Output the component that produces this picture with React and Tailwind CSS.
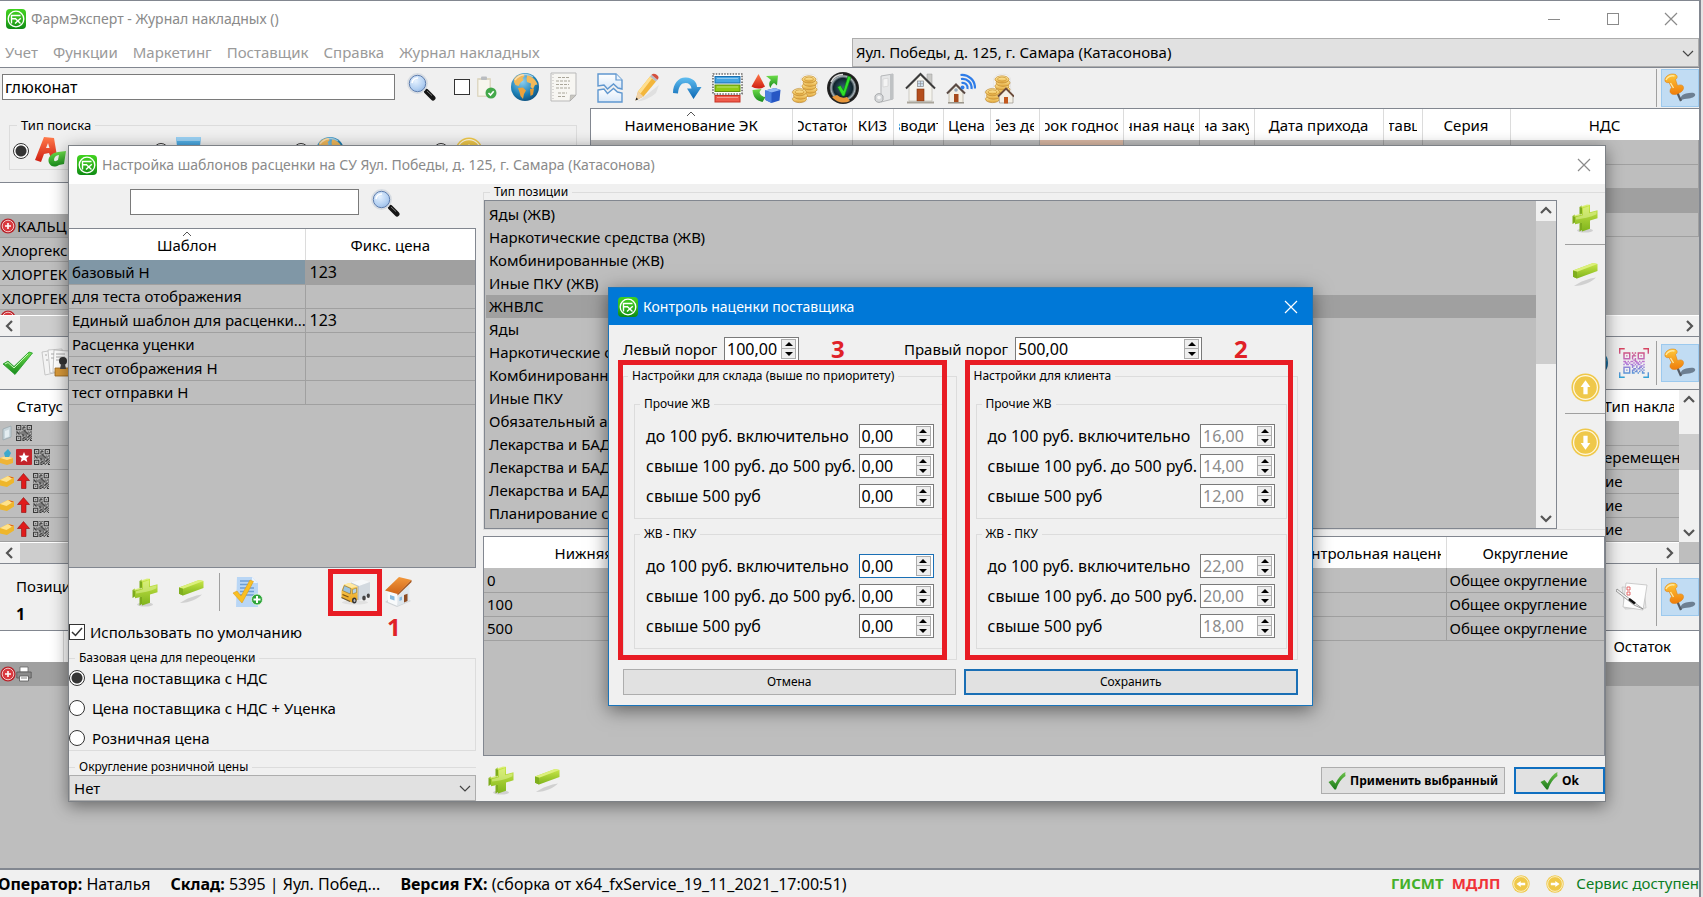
import React from 'react';

/* ---------- icons ---------- */

function Defs() {
  const lin = (id, a, b, c) => (
    <linearGradient id={id} x1="0" y1="0" x2="0" y2="1">
      <stop offset="0" stopColor={a} />
      {c && <stop offset=".5" stopColor={c} />}
      <stop offset="1" stopColor={b} />
    </linearGradient>
  );
  return (
    <svg width="0" height="0" className="absolute" aria-hidden="true">
      <defs>
        {lin('gLogo', '#3fd21e', '#0c8a12', '#35b81f')}
        {lin('gLime', '#cbe84a', '#7fb41c')}
        {lin('gLimeD', '#a5cf33', '#6c9f14')}
        {lin('gGold', '#fff0b0', '#e0a437', '#f5d076')}
        {lin('gBlue', '#5fbdf0', '#0d68b4')}
        {lin('gGreen', '#6ddd4a', '#188a1c')}
        {lin('gRed', '#ff7a4a', '#cf1d12')}
        {lin('gPin', '#ffc93a', '#ef7c0a')}
        {lin('gCab', '#ffd768', '#e9a21b')}
        {lin('gRoof', '#f2983c', '#cf6418')}
        {lin('gPage', '#ffffff', '#d9e8f8')}
        {lin('gTick', '#6cc24a', '#1b7a1b')}
        <radialGradient id="gLens" cx=".4" cy=".35" r=".75">
          <stop offset="0" stopColor="#e6f2ff" />
          <stop offset=".6" stopColor="#b3d0f2" />
          <stop offset="1" stopColor="#8aaede" />
        </radialGradient>
        <radialGradient id="gSea" cx=".4" cy=".3" r=".8">
          <stop offset="0" stopColor="#8fd0f2" />
          <stop offset=".6" stopColor="#1c7fb4" />
          <stop offset="1" stopColor="#0a4470" />
        </radialGradient>
        <radialGradient id="gOrb" cx=".5" cy=".5" r=".5">
          <stop offset="0" stopColor="#37637a" />
          <stop offset=".6" stopColor="#10232c" />
          <stop offset=".75" stopColor="#a9b4ba" />
          <stop offset=".86" stopColor="#161616" />
          <stop offset="1" stopColor="#2c2c2c" />
        </radialGradient>
        <linearGradient id="gQr" gradientUnits="userSpaceOnUse" x1="0" y1="-2" x2="0" y2="19">
          <stop offset="0" stopColor="#d8435c" />
          <stop offset=".5" stopColor="#b878d8" />
          <stop offset="1" stopColor="#2fa3d6" />
        </linearGradient>
      </defs>
    </svg>
  );
}

const Logo = () => (
  <svg width="20" height="20" viewBox="0 0 20 20" className="shrink-0" aria-hidden="true">
    <rect width="20" height="20" rx="4" fill="url(#gLogo)" />
    <circle cx="10" cy="10" r="7.800" fill="none" stroke="#fff" strokeWidth="1.300" />
    <path d="M5.500 14.500V6.500h9M5.500 9.800h4.500M9 9.200l5.500 5.400M14.800 9.200L9 14.600" fill="none" stroke="#fff" strokeWidth="1.400" />
  </svg>
);

const Magnifier = () => (
  <svg width="29" height="28" viewBox="0 0 29 28" aria-hidden="true">
    <path d="M17 16l3 3" stroke="#8c8c8c" strokeWidth="3" />
    <path d="M19.500 18.500l6.500 6.500" stroke="#161616" strokeWidth="5" strokeLinecap="round" />
    <path d="M20 18l5 4.600" stroke="#777" strokeWidth="1" />
    <circle cx="10.500" cy="10.500" r="9.200" fill="url(#gLens)" stroke="#d7dce2" strokeWidth="2.400" />
    <circle cx="10.500" cy="10.500" r="8.200" fill="none" stroke="#5f7fb0" strokeWidth="1" />
    <path d="M5 10a6 6 0 0 1 6-5" fill="none" stroke="#fff" strokeWidth="1.600" />
  </svg>
);

const Plus3D = () => (
  <svg width="26" height="29" viewBox="0 0 26 29" aria-hidden="true">
    <ellipse cx="13" cy="26.500" rx="8" ry="2" fill="#0002" />
    <path d="M7.500 3L10 1.500V10l-2.500 1zM.5 12L3 10.500v8L.5 20zM7.500 19.500L10 18v8l-2.500 1.500z" fill="#7dab1d" />
    <path d="M7.500 3L15 .5l3 .3L10.500 3.500zM.5 12l7-2 3-.3L3 12.500z" fill="#dcf07c" />
    <path d="M10 3.300l8-2.500v7.500l7.500-2v8L18 16.500v8.300L10 27.500v-8.800L3 20.300v-8l7-1.800z" fill="url(#gLime)" />
    <path d="M11 4.200l6-1.900v7l7.500-2v3C19 13 10 15 4 15.500v-2.300l7-1.900z" fill="#eefab0" opacity=".45" />
  </svg>
);

const Minus3D = () => (
  <svg width="26" height="26" viewBox="0 0 26 26" aria-hidden="true">
    <path d="M2 24C8 19.500 17 16.500 24 15.500c-4 4-12 8.500-22 8.500z" fill="#0002" />
    <path d="M1 8.500L21 1l4.500 1v7L5 16.500l-4-1.700z" fill="url(#gLime)" />
    <path d="M1 8.500L21 1l4.500 1L5 9.700z" fill="#dcf07c" />
    <path d="M1 8.500l4 1.200v6.800L1 14.800z" fill="#7fae1e" />
  </svg>
);

const Coin = ({ dir, size = 29 }) => {
  const turn = { up: 0, right: 90, down: 180, left: 270 }[dir];
  return (
    <svg width={size} height={size} viewBox="0 0 30 30" aria-hidden="true">
      <circle cx="15" cy="15" r="14.500" fill="#efc84a" />
      <circle cx="15" cy="15" r="12.300" fill="none" stroke="#fff8e0" strokeWidth="1.300" />
      <path d="M15 7.500l5 7h-2.800v7.500h-4.400v-7.500H10z" fill="#fff" transform={`rotate(${turn} 15 15)`} />
    </svg>
  );
};

const Globe = ({ size = 30 }) => (
  <svg width={size} height={size} viewBox="0 0 30 30" aria-hidden="true">
    <circle cx="15" cy="15" r="14" fill="url(#gSea)" />
    <path d="M4 7c3-4 7-5 9.500-5l1 2.500-2 1.500 1 2-3 2.500-2 3.500-3-1-1.500-3z" fill="#f2b95a" />
    <path d="M8 16l5-.5 3 3-2 3.500-1 5-2.500-3-1-4z" fill="#eaa23c" />
    <path d="M17 3.500c5 .5 9 4.500 10.500 9l-2.500.5-2 4-2.500-2 .5-3.500-4-1.500-.5-3z" fill="#f2b95a" />
    <path d="M20 17l4-.5-1 6-2.500 1.500z" fill="#e59a33" />
    <path d="M5 8a13 13 0 0 1 18-3" stroke="#fff8" strokeWidth="1.500" fill="none" />
  </svg>
);

const Clipboard = () => (
  <svg width="21" height="23" viewBox="0 0 21 23" aria-hidden="true">
    <rect x="1" y="2" width="14" height="19" rx="1" fill="#ded8c4" />
    <rect x="2.500" y="4" width="11" height="15.500" fill="#f8f6ee" />
    <rect x="5" y=".5" width="6" height="3.500" rx="1" fill="#b9bcc0" />
    <circle cx="15" cy="17" r="5.500" fill="#43a84a" />
    <path d="M12.500 17l2 2 3.200-3.800" stroke="#fff" strokeWidth="1.600" fill="none" />
  </svg>
);

const Paper = () => (
  <svg width="27" height="30" viewBox="0 0 27 30" aria-hidden="true">
    <path d="M1 1h25v22l-6 6H1z" fill="#f7f6f2" stroke="#b9b9b9" />
    <path d="M20 29l.5-6 5.500.2z" fill="#c9c7c0" stroke="#a8a8a8" strokeWidth=".6" />
    <path d="M8 5.500h12M6 9h14M6 12.500h13M6 16h14M8 21h9M8 24.500h8" stroke="#aaa69a" strokeWidth="1.100" strokeDasharray="3 1" />
    <path d="M3 2v26" stroke="#bdb9b9" strokeWidth="1" strokeDasharray="1 2" />
  </svg>
);

const TornDoc = () => (
  <svg width="28" height="30" viewBox="0 0 28 30" aria-hidden="true">
    <path d="M2 13V1h18l6 6v9l-4-1-4.500-4-6 5-3.500-4z" fill="url(#gPage)" stroke="#5f97cf" strokeWidth="1.400" />
    <path d="M20 1v6h6" fill="#eaf3fc" stroke="#5f97cf" strokeWidth="1.200" />
    <path d="M2 17l6-1 3.500 4.500 6-5 4 3.500 4.500 1v9H2z" fill="url(#gPage)" stroke="#5f97cf" strokeWidth="1.400" />
  </svg>
);

const Pencil = () => (
  <svg width="26" height="30" viewBox="0 0 26 30" aria-hidden="true">
    <path d="M3 28c6-2 16-12 22-16l-3 8c-6 5-14 9-19 8z" fill="#0001" />
    <path d="M1.500 27.500l2.500-9L16 3.500l6 5L9.500 23.500z" fill="#f3b63c" />
    <path d="M4 18.500L16 3.500l2.200 1.800L6.500 20.500z" fill="#ffdf8e" />
    <path d="M1.500 27.500l2.500-9 5.500 5z" fill="#f0d2a8" />
    <path d="M1.500 27.500l.8-3 2 1.800z" fill="#222" />
    <path d="M16 3.500l1.500-1.800 6 5L22 8.500z" fill="#b9bdc4" />
    <path d="M17.500 1.700C19 0 21 .5 23 2s2 3.200.5 4.700z" fill="#d4503e" />
  </svg>
);

const CurveArrow = () => (
  <svg width="30" height="24" viewBox="0 0 30 24" aria-hidden="true">
    <path d="M1 17C1 7 7 1 14 1.500S25 6 25 11h4.500L21.500 23 15 12.500h4.500C19 9 17 7 13.500 7 9.500 7 6.500 10 6 17.500z" fill="url(#gBlue)" />
  </svg>
);

const RowsIcon = () => (
  <svg width="31" height="30" viewBox="0 0 31 30" aria-hidden="true">
    <rect x="1" y="1" width="29" height="20" fill="#fff" stroke="#222" strokeWidth="1.100" strokeDasharray="1.500 1.300" />
    <rect x="3" y="3.500" width="25" height="6.500" fill="#45a5e4" stroke="#1b6fae" />
    <rect x="3" y="12" width="25" height="6.500" fill="#8ecb15" stroke="#5b8d0c" />
    <rect x="3" y="22.500" width="25" height="6.500" fill="#ef5b4c" stroke="#c53225" />
    <path d="M5 5.500h21M5 14h21M5 24.500h21" stroke="#fff6" strokeWidth="1.200" />
  </svg>
);

const Shapes = () => (
  <svg width="30" height="30" viewBox="0 0 30 30" aria-hidden="true">
    <path d="M7.500 1L14 13.500c-3 2.500-10 2.500-13.500 0z" fill="url(#gRed)" />
    <path d="M15 3l12-.5-1 10-3-2.500c-2 1-3 3-3.500 5-2-3-1.500-6.500.5-8z" fill="url(#gGreen)" />
    <path d="M1.500 17l9-1-2 3c.5 3 2.500 4.500 6 5l-3 5C5 27.500 2 24 1.500 17z" fill="url(#gGreen)" />
    <path d="M14 17.500l10-2.500 5.500 2-1 10.500-8 2.500-6-3z" fill="#2757c4" />
    <path d="M14 17.500l10-2.500 5.500 2-9 2.500z" fill="#8bb3f5" />
    <path d="M14 17.500l6.500 2V30l-6-3z" fill="#4c80e0" />
  </svg>
);

const CoinStack = ({ x, y, n }) => (
  <g>
    {Array.from({ length: n }, (_, i) => (
      <ellipse key={i} cx={x + (i % 2)} cy={y - i * 3.4} rx="7" ry="3.6" fill="url(#gGold)" stroke="#c08a30" strokeWidth=".7" />
    ))}
    <ellipse cx={x + ((n - 1) % 2)} cy={y - (n - 1) * 3.4 - 0.3} rx="4.500" ry="2" fill="none" stroke="#c98f2c" strokeWidth=".7" />
  </g>
);

const Coins = ({ house }) => (
  <svg width="30" height="31" viewBox="0 0 30 31" aria-hidden="true">
    <path d="M10 5c2-5 15-5 16 0l1 15-9 4-2 4c-5 3-14 2-15-2V18l9-4z" fill="#fff" stroke="#dedede" strokeWidth=".8" />
    <CoinStack x={18} y={20} n={5} />
    <CoinStack x={8.5} y={26} n={3} />
    {house && (
      <g>
        <path d="M15 23l7-7 7 7v7H15.500z" fill="#f3efe6" stroke="#8b8378" strokeWidth=".6" />
        <path d="M14 23.500l8-8 8 8" stroke="#6a4a3a" strokeWidth="1.800" fill="none" />
        <rect x="20" y="24" width="4" height="6.500" fill="#c2571d" />
      </g>
    )}
  </svg>
);

const Orb = () => (
  <svg width="32" height="32" viewBox="0 0 32 32" aria-hidden="true">
    <circle cx="16" cy="16" r="16" fill="url(#gOrb)" />
    <path d="M5 25a14.500 14.500 0 0 0 18 4l-3-4a10 10 0 0 1-10-2z" fill="#e8963a" />
    <path d="M4 10a13 13 0 0 1 12-7.500" fill="none" stroke="#ddd" strokeWidth="1.500" />
    <path d="M10.500 15l3-1.500 3 5L21 4l3 1-6.500 19h-2z" fill="#2fe02a" stroke="#0c7a10" strokeWidth=".6" />
  </svg>
);

const Door = () => (
  <svg width="22" height="30" viewBox="0 0 22 30" aria-hidden="true">
    <path d="M8 3l12-2v25L8 29z" fill="#e6e7e8" stroke="#b5b7b9" />
    <path d="M17 1.500l3-.5v25l-3 .8z" fill="#bfc2c4" />
    <path d="M10 6l5-.8v8L10 14z" fill="#f4f4f4" stroke="#cfcfcf" strokeWidth=".6" />
    <path d="M2 23a4.500 4.500 0 0 1 8 0v4a4.500 4.500 0 0 1-8 0z" fill="#d6d8da" stroke="#9a9d9f" strokeWidth=".8" />
    <circle cx="6" cy="24.500" r="1.800" fill="#f6f6f6" />
  </svg>
);

const House = () => (
  <svg width="31" height="32" viewBox="0 0 31 32" aria-hidden="true">
    <path d="M22 2h5v10l-5-5z" fill="#c9c9c6" stroke="#999" strokeWidth=".5" />
    <path d="M4 15L15.500 3.500 27 15v14H4z" fill="#f5f4ee" stroke="#b5b2a8" strokeWidth=".6" />
    <path d="M1 16.500L15.500 2 30 16.500" fill="none" stroke="#3c3c3c" strokeWidth="2" />
    <rect x="12" y="17" width="7" height="12" fill="#b54f1c" stroke="#7d3410" strokeWidth=".6" />
    <rect x="12.500" y="9" width="6" height="5.500" fill="#cfe1f0" stroke="#888" strokeWidth=".7" />
    <path d="M15.500 9v5.500M12.500 11.700h6" stroke="#888" strokeWidth=".6" />
    <path d="M2 29.500h27v2H2z" fill="#a9a59b" />
  </svg>
);

const HouseWifi = () => (
  <svg width="30" height="31" viewBox="0 0 30 31" aria-hidden="true">
    <path d="M3 20l7-7 7 7v9.500H3z" fill="#f2eee4" stroke="#aaa292" strokeWidth=".6" />
    <path d="M1 20.500L10 11.500l9 9" fill="none" stroke="#5a4a44" strokeWidth="2" />
    <rect x="8" y="21" width="4.500" height="8.500" fill="#a74a1b" />
    <circle cx="10" cy="17" r="1.800" fill="#9ab" />
    <path d="M2 29.800h16" stroke="#99948a" strokeWidth="1.500" />
    <g fill="none" stroke="#2f7de8" strokeWidth="2.200">
      <path d="M15.500 10a5 5 0 0 1 6 6" />
      <path d="M15 6a9 9 0 0 1 10.500 10" />
      <path d="M14.500 2A13 13 0 0 1 29 15.500" />
    </g>
    <circle cx="16.500" cy="14.500" r="2" fill="#2f7de8" />
  </svg>
);

const Pin = () => (
  <svg width="32" height="30" viewBox="0 0 32 30" aria-hidden="true">
    <path d="M16 26c1-3 3-5 6-5.500 4-1 8-1.500 9 .5s-2 4-6 4.500c-3 .5-6 0-8 2z" fill="#6d7f92" />
    <path d="M13 19l4 9" stroke="#555c66" strokeWidth="2.200" />
    <path d="M1 8C0 4 5 .5 9.500 1s4.500 4 2 5.500l2 6c4-1.500 6.500 0 6 3s-6 6.500-10 6-4.500-4-2-7L5 9.500C3 10 1.500 9.500 1 8z" fill="url(#gPin)" stroke="#dc7a0c" strokeWidth=".5" />
    <path d="M2 7C3 4 7 2 10.500 3M6.500 10l3 5" fill="none" stroke="#ffe7a0" strokeWidth="1.400" />
  </svg>
);

const DocTick = () => (
  <svg width="31" height="32" viewBox="0 0 31 32" aria-hidden="true">
    <path d="M5 1h15l6 6v24H4z" fill="#b9d6f5" />
    <path d="M20 1v6h6z" fill="#eaf4ff" />
    <path d="M8 5h10M8 8.500h12M8 12h14M8 15.500h14M8 19h14" stroke="#6c9fd6" strokeWidth="1.300" />
    <path d="M1 17l4-2 4 5L18 4l3.500 1.500L10 27z" fill="#f9bf23" stroke="#d9940c" strokeWidth=".5" />
    <circle cx="25" cy="23.500" r="5.500" fill="#2fa53a" stroke="#e8f6e8" strokeWidth=".8" />
    <path d="M25 20v7M21.500 23.500h7" stroke="#fff" strokeWidth="2" />
  </svg>
);

const Truck = () => (
  <svg width="31" height="26" viewBox="0 0 31 26" aria-hidden="true">
    <ellipse cx="15" cy="23.500" rx="13" ry="2" fill="#0001" />
    <path d="M11 3.500L22 .5l8 2.500-11 4z" fill="#f7f9fa" />
    <path d="M19 7l11-4v13l-11 5.500z" fill="#d3dae0" />
    <path d="M11 3.500L19 7v14.500L11 18z" fill="#b9c2ca" />
    <path d="M1.500 12L4 5.500l6-1.500 7.500 3.500v13.500L12 23.500 1.500 19z" fill="url(#gCab)" />
    <path d="M4 5.500L10 4l7.500 3.500-6 1.500z" fill="#ffe9a3" />
    <path d="M2.500 11.500L4.300 6.600l6.700 3-.8 5.400z" fill="#9cc4e0" stroke="#8b6a20" strokeWidth=".6" />
    <path d="M12.500 10.500l4-1.500v4.500l-4 1.500z" fill="#b5d3e6" stroke="#8b6a20" strokeWidth=".5" />
    <path d="M2.500 15.500l6 2.500" stroke="#7a5310" strokeWidth="1.300" />
    <path d="M1.500 18.500L10 22.500" stroke="#6b5a3a" strokeWidth="1.200" />
    <ellipse cx="14.300" cy="21.500" rx="2.300" ry="3" fill="#333" />
    <ellipse cx="14.500" cy="21.500" rx="1" ry="1.500" fill="#bbb" />
    <ellipse cx="24" cy="19" rx="1.800" ry="2.500" fill="#444" />
    <ellipse cx="28.300" cy="16.800" rx="1.600" ry="2.300" fill="#444" />
  </svg>
);

const CottageIcon = () => (
  <svg width="27" height="30" viewBox="0 0 27 30" aria-hidden="true">
    <path d="M0 25l12 5 14-6-3-2-11 5-9-4z" fill="#cfd3d6" />
    <path d="M2.500 13l10 4v12l-9.500-4z" fill="#f8fafb" />
    <path d="M12.500 17l12-11v18l-12 5z" fill="#dfe6eb" />
    <path d="M0 13.500L14 0l12.500 3L12.500 17z" fill="url(#gRoof)" />
    <path d="M26.500 3L12.500 17v1.500L26.500 5z" fill="#a14d12" />
    <path d="M5 18l4.500 1.600v4L5 22z" fill="#86b9dc" />
    <path d="M19 18l3.500-1.300v7.300L19 25.500z" fill="#8c4b22" />
    <path d="M14.500 20.500l2.500-1v3.500l-2.500 1z" fill="#86b9dc" />
  </svg>
);

const GreenTick = () => (
  <svg width="31" height="25" viewBox="0 0 31 25" aria-hidden="true">
    <path d="M1 13l5-3 6 5.500L27 1l3.500 1L13 23.500z" fill="url(#gGreen)" stroke="#1f9a27" strokeWidth=".8" />
    <path d="M3 13l3-1.500 6 5.500L26 3" fill="none" stroke="#c8f7bd" strokeWidth="1" />
  </svg>
);

const SmallTick = () => (
  <svg width="18" height="18" viewBox="0 0 18 18" aria-hidden="true">
    <path d="M.5 10l4-2 3 3.500C10 6 13.500 2 17.500 0c-.5 2 0 3 0 4C13 7 10.500 11 8 17.500H6.500z" fill="url(#gTick)" />
  </svg>
);

const StampDocs = () => (
  <svg width="34" height="30" viewBox="0 0 34 30" aria-hidden="true">
    <path d="M1 4l13-2 3 22-13 3z" fill="#f3f3f3" stroke="#bbb" strokeWidth=".8" />
    <path d="M7 2l14-1 2 23-14 1z" fill="#fafafa" stroke="#bbb" strokeWidth=".8" />
    <path d="M13 2l15 1-1 22-15-1z" fill="#fff" stroke="#bbb" strokeWidth=".8" />
    <path d="M4 7h2M5 12h2M10 6h3M10 10h3M15 6h9M15 9h9M15 12h8" stroke="#aaa" strokeWidth="1" />
    <path d="M14 20h19v8H14z" fill="#d99a3a" stroke="#96631a" strokeWidth=".8" />
    <circle cx="22" cy="13" r="4" fill="#333" />
    <path d="M20 16h4l1 5h-6z" fill="#444" />
  </svg>
);

const CheckList = () => (
  <svg width="32" height="30" viewBox="0 0 32 30" aria-hidden="true">
    <path d="M6 5l22 1 2 20-21 1z" fill="#e9e9e9" stroke="#c5c5c5" strokeWidth=".8" />
    <path d="M10 1l21 2-4 25L7 25z" fill="#fdfdfd" stroke="#c0c0c0" strokeWidth=".8" />
    <path d="M11 5h3v3h-3zM11 10h3v3h-3z" fill="#fff" stroke="#e05a5a" strokeWidth=".9" />
    <path d="M1 7l18 14 8 6-9-4L0 9z" fill="#f4f4f4" stroke="#888" strokeWidth=".8" />
    <path d="M13 17l6 4.500" stroke="#111" strokeWidth="2.600" />
  </svg>
);

const QR_ROWS = [
  '111110101011111', '100010010010001', '101010111010101', '100010100010001', '111110101011111',
  '000000011000000', '110101101101011', '011010010110100', '101101101011001', '000000110100110',
  '111110100101101', '100010011011010', '101010110100101', '100010101101010', '111110110010011',
];
const Qr = ({ size = 16, fill = '#3a3a3a', frame }) => {
  const d = QR_ROWS.map((r, y) => [...r].map((c, x) => (c === '1' ? `M${x + 1} ${y + 1}h1v1h-1z` : '')).join('')).join('');
  return (
    <svg width={size} height={size} viewBox={frame ? '-2 -2 21 21' : '1 1 15 15'} className="shrink-0" aria-hidden="true">
      <path d={d} fill={fill} />
      {frame && <path d="M-1.500 2v-3.500H2M15 -1.500h3.500V2M18.500 15v3.500H15M2 18.500h-3.500V15" fill="none" stroke={fill} strokeWidth="1" />}
    </svg>
  );
};

const RedPlus = () => (
  <svg width="16" height="16" viewBox="0 0 16 16" className="shrink-0" aria-hidden="true">
    <circle cx="8" cy="8" r="7.600" fill="#b8232a" />
    <circle cx="8" cy="8" r="5.800" fill="#d9383e" stroke="#f3c6c6" strokeWidth="1" />
    <path d="M8 5v6M5 8h6" stroke="#fff" strokeWidth="1.600" />
  </svg>
);
const Printer = () => (
  <svg width="16" height="16" viewBox="0 0 16 16" className="shrink-0" aria-hidden="true">
    <path d="M4 1h8v5H4z" fill="#fff" stroke="#666" strokeWidth=".8" />
    <path d="M.8 6h14.400v6H.8z" fill="#8b8b8b" stroke="#555" strokeWidth=".8" />
    <path d="M3.500 10h9v5h-9z" fill="#fff" stroke="#555" strokeWidth=".8" />
    <path d="M5 12h6" stroke="#888" />
  </svg>
);
const Gold = () => (
  <svg width="14" height="14" viewBox="0 0 14 14" className="shrink-0" aria-hidden="true">
    <path d="M0 6l8-4 6 1.500v5L7 13l-7-1.500z" fill="#eeb62c" />
    <path d="M0 6l8-4 6 1.500L6.500 8z" fill="#ffe28a" />
    <path d="M8 2l6 1.500-2 1z" fill="#d6651f" />
  </svg>
);
const UpArrow = () => (
  <svg width="15" height="16" viewBox="0 0 15 16" className="shrink-0" aria-hidden="true">
    <path d="M7.500 .5l6 7H10V15.500H5.500V7.500h-4z" fill="#e01b1b" stroke="#8f0d0d" strokeWidth=".6" />
  </svg>
);
const Star = () => (
  <svg width="16" height="16" viewBox="0 0 16 16" className="shrink-0" aria-hidden="true">
    <rect width="16" height="16" rx="1" fill="#c3242b" />
    <path d="M8 3l1.500 3.500 3.800.3-2.900 2.500.9 3.700L8 11l-3.300 2 .9-3.700-2.900-2.500 3.800-.3z" fill="#fff" />
  </svg>
);
const MiniBox = () => (
  <svg width="14" height="16" viewBox="0 0 14 16" className="shrink-0" aria-hidden="true">
    <path d="M0 9l6-2 7 2v5l-6 2-7-2z" fill="#efb437" />
    <path d="M0 9l6-2 7 2-6 2z" fill="#ffdf8a" />
    <path d="M4 4l4-4 3 4-2 4-4 0z" fill="#3da9cc" />
  </svg>
);
const MiniPage = () => (
  <svg width="14" height="16" viewBox="0 0 14 16" className="shrink-0" aria-hidden="true">
    <path d="M3 4l8-3v11l-8 3z" fill="#c9d6dc" stroke="#93a3ab" strokeWidth=".7" />
    <path d="M5 6l4-1.500v7L5 13z" fill="#e4edf1" />
  </svg>
);
const Letters = () => (
  <svg width="32" height="31" viewBox="0 0 32 31" aria-hidden="true">
    <path d="M0 24L9 1l10 1 3 18-6 2-2-5-5 1-3 8z" fill="url(#gRed)" />
    <path d="M11 12l2-5 1.500 5z" fill="#f0f0f0" />
    <path d="M14 27c-2-5 2-10 9-11l8-1-2 13-5 1c-4 2.500-8 2-10-2z" fill="url(#gGreen)" />
    <path d="M19 24c0-3 2-4.500 5-5l-1 5c-2 1.500-4 1.500-4 0z" fill="#f0f0f0" />
  </svg>
);
const Bucket = () => (
  <svg width="27" height="30" viewBox="0 0 27 30" aria-hidden="true">
    <path d="M1 1h25l-3 28H4z" fill="url(#gBlue)" />
    <path d="M1 1h25l-.5 4h-24z" fill="#9bd2f5" />
  </svg>
);

const Chevron = ({ dir = 'down', thin }) => {
  const d = {
    down: 'M2 5l5 5 5-5', up: 'M2 9l5-5 5 5', left: 'M9 2L4 7l5 5', right: 'M5 2l5 5-5 5',
  }[dir];
  return (
    <svg width="14" height="14" viewBox="0 0 14 14" aria-hidden="true">
      <path d={d} fill="none" stroke={thin ? '#444' : '#555'} strokeWidth={thin ? 1.2 : 2.2} />
    </svg>
  );
};
const Cross = ({ color = '#8a8a8a' }) => (
  <svg width="14" height="14" viewBox="0 0 14 14" aria-hidden="true">
    <path d="M1 1l12 12M13 1L1 13" stroke={color} strokeWidth="1.200" />
  </svg>
);
const SortMark = () => (
  <svg width="10" height="6" viewBox="0 0 10 6" className="absolute left-1/2 top-0.5 -translate-x-1/2" aria-hidden="true">
    <path d="M1 5l4-4 4 4" fill="none" stroke="#555" strokeWidth="1" />
  </svg>
);

/* ---------- small controls ---------- */

const IconButton = ({ label, className = '', children }) => (
  <button type="button" aria-label={label} className={`flex shrink-0 items-center justify-center ${className}`}>{children}</button>
);

const PinButton = () => (
  <button type="button" aria-label="Закрепить" className="flex h-[38px] w-[38px] shrink-0 items-center justify-center border border-[#9cc9ee] bg-[#c1dcf3]">
    <Pin />
  </button>
);

const Radio = ({ id, name, label, checked }) => (
  <div className="flex h-6 items-center gap-[7px]">
    <input id={id} type="radio" name={name} defaultChecked={checked} className="h-4 w-4 appearance-none rounded-full border border-[#333] bg-white checked:bg-[radial-gradient(circle,#333_0_5px,#fff_6px)]" />
    <label htmlFor={id}>{label}</label>
  </div>
);

const Spin = ({ id, value, disabled, focused, className = 'w-[75px]' }) => (
  <div className={`flex h-6 items-center border bg-white pr-0.5 ${focused ? 'border-[#1a6fb5]' : 'border-[#7a7a7a]'} ${className}`}>
    <input id={id} type="text" defaultValue={value} disabled={disabled} className={`w-0 min-w-0 flex-1 bg-transparent pl-0.5 text-base leading-5 outline-none ${disabled ? 'text-[#8c8c8c]' : 'text-black'}`} />
    <div className="flex w-[15px] flex-col">
      <button type="button" aria-label="Больше" className="flex h-[10px] items-center justify-center border border-[#acacac] bg-[#eee]">
        <svg width="8" height="4" viewBox="0 0 8 4" aria-hidden="true"><path d="M0 4l4-4 4 4z" /></svg>
      </button>
      <button type="button" aria-label="Меньше" className="flex h-[10px] items-center justify-center border border-t-0 border-[#acacac] bg-[#eee]">
        <svg width="8" height="4" viewBox="0 0 8 4" aria-hidden="true"><path d="M0 0h8L4 4z" /></svg>
      </button>
    </div>
  </div>
);

const VScroll = ({ space, thumb, className = '' }) => (
  <div className={`flex w-5 shrink-0 flex-col items-center bg-[#f0f0f0] ${className}`}>
    <div className="flex h-5 items-center"><Chevron dir="up" /></div>
    <div className={space} />
    <div className={`w-full bg-[#cdcdcd] ${thumb}`} />
    <div className="flex-1" />
    <div className="flex h-5 items-center"><Chevron dir="down" /></div>
  </div>
);

const HScroll = () => (
  <div className="flex h-[21px] w-full items-center justify-between border-t border-white bg-[#f0f0f0]">
    <div className="flex w-5 justify-center"><Chevron dir="left" /></div>
    <div className="h-full w-1/2 bg-[#cdcdcd]" />
    <div className="flex-1" />
    <div className="flex w-5 justify-center"><Chevron dir="right" /></div>
  </div>
);

const Th = ({ children, sort, align = 'justify-center', className = '' }) => (
  <th className={`relative h-[31px] border-r border-[#dcdcdc] bg-white px-[5px] font-normal last:border-r-0 ${className}`}>
    {sort && <SortMark />}
    <div className={`flex overflow-hidden whitespace-nowrap ${align}`}><span className="shrink-0">{children}</span></div>
  </th>
);

/* ---------- main window ---------- */

const PRODUCT_COLS = [
  ['Наименование ЭК', 'w-[201px]'], ['Остаток', 'w-[60px]'], ['КИЗ', 'w-[41px]'], ['зводит', 'w-[50px]'],
  ['Цена', 'w-[47px]'], ['без де', 'w-[49px]'], ['рок годнос', 'w-[84px]'], ['чная наце', 'w-[76px]'],
  ['на заку', 'w-[55px]'], ['Дата прихода', 'w-[129px]'], ['ставш', 'w-[39px]'], ['Серия', 'w-[88px]'], ['НДС', ''],
];
const ROW_TONES = ['bg-[#bebebe]', 'bg-[#bebebe]', 'bg-[#a0a0a0]', 'bg-[#bebebe]'];

function SearchPane() {
  return (
    <div className="flex min-w-0 flex-col">
      <div className="flex h-[38px] items-center pl-0.5">
        <input type="text" aria-label="Поиск" defaultValue="глюконат" className="h-[26px] w-[393px] border border-[#7a7a7a] bg-white px-0.5 text-base outline-none" />
        <IconButton label="Найти" className="ml-3"><Magnifier /></IconButton>
        <input type="checkbox" aria-label="Отобранные" className="ml-[18px] h-4 w-4 appearance-none border border-[#333] bg-white" />
        <span className="ml-1.5"><Clipboard /></span>
        <IconButton label="Интернет" className="ml-[13px]"><Globe /></IconButton>
        <IconButton label="Документ" className="ml-2.5"><Paper /></IconButton>
      </div>
      <fieldset className="ml-[9px] mr-5 mt-[11px] border border-[#dcdcdc] px-[3px]">
        <legend className="ml-1 px-1 text-[13px] leading-4">Тип поиска</legend>
        <div className="flex h-[36px] items-center">
          {[['Название', <Letters />], ['Группа', <Bucket />], ['Регион', <Globe size={30} />], ['Цена', <Coin dir="up" size={28} />]].map(([l, icon], i) => (
            <label key={l} className="flex w-[140px] items-center gap-1.5">
              <input type="radio" name="kind" aria-label={l} defaultChecked={i === 0} className="h-4 w-4 appearance-none rounded-full border border-[#333] bg-white checked:bg-[radial-gradient(circle,#333_0_5px,#fff_6px)]" />
              {icon}
            </label>
          ))}
        </div>
      </fieldset>
      <div className="mt-3 flex flex-1 flex-col border-t border-[#828790] bg-[#bebebe]">
        <div className="h-[31px] bg-white" />
        <div className="flex h-6 items-center border-b border-[#a0a0a0] bg-[#b0b0b0]"><RedPlus /><span className="ml-px">КАЛЬЦ</span></div>
        {['Хлоргекси', 'ХЛОРГЕК', 'ХЛОРГЕК'].map((t, i) => (
          <div key={i} className="flex h-6 items-center border-b border-[#a0a0a0] pl-0.5">{t}</div>
        ))}
        <div className="flex h-[5px] overflow-hidden"><RedPlus /></div>
        <HScroll />
      </div>
    </div>
  );
}

function StockPane() {
  const tools = [
    ['Разорвать', <TornDoc />, ''], ['Изменить', <Pencil />, 'ml-2.5'], ['Повторить', <CurveArrow />, 'ml-3'],
    ['Строки', <RowsIcon />, 'ml-2.5'], ['Обмен', <Shapes />, 'ml-2'], ['Монеты', <Coins />, 'ml-2.5'],
    ['Проверка', <Orb />, 'ml-1.5'], ['Дверь', <Door />, 'ml-3.5'], ['Дом', <House />, 'ml-2.5'],
    ['Сеть', <HouseWifi />, 'ml-2.5'], ['Цены аптеки', <Coins house />, 'ml-2'],
  ];
  return (
    <div className="flex min-w-0 flex-col">
      <div className="flex h-10 items-center pl-1.5">
        {tools.map(([l, icon, cls]) => <IconButton key={l} label={l} className={cls}>{icon}</IconButton>)}
        <div className="ml-auto mr-1 h-[38px] w-px bg-[#a0a0a0]" />
        <PinButton />
      </div>
      <div className="flex flex-1 flex-col border-l border-t border-[#828790] bg-[#bebebe]">
        <table className="w-full table-fixed border-collapse">
          <thead>
            <tr>{PRODUCT_COLS.map(([t, w], i) => <Th key={t} sort={i === 0} className={w}>{t}</Th>)}</tr>
          </thead>
          <tbody>
            {ROW_TONES.map((tone, r) => (
              <tr key={r} className={tone}>
                {PRODUCT_COLS.map(([t], c) => (
                  <td key={t} className={`h-6 border-b border-r border-[#a0a0a0] ${c === 6 && r === 0 ? 'bg-[#d9b8a4]' : ''}`} />
                ))}
              </tr>
            ))}
          </tbody>
        </table>
        <div className="flex-1" />
        <HScroll />
      </div>
    </div>
  );
}

const INVOICES = [
  { icons: [MiniPage, Qr], kind: '' },
  { icons: [MiniBox, Star, Qr], kind: 'Перемещение' },
  { icons: [Gold, UpArrow, Qr], kind: 'ие' },
  { icons: [Gold, UpArrow, Qr], kind: 'ие' },
  { icons: [Gold, UpArrow, Qr], kind: 'ие' },
];

function InvoicePane() {
  return (
    <section className="border-t border-[#828790]">
      <div className="flex h-[52px] items-center">
        <IconButton label="Принять" className="ml-0.5"><GreenTick /></IconButton>
        <IconButton label="Документы" className="ml-2"><StampDocs /></IconButton>
        <IconButton label="Портал" className="ml-auto"><Globe /></IconButton>
        <IconButton label="Маркировка" className="ml-2.5"><Qr size={30} fill="url(#gQr)" frame /></IconButton>
        <div className="ml-[7px] mr-1 h-11 w-px bg-[#a0a0a0]" />
        <PinButton />
      </div>
      <div className="flex border-t border-[#828790] bg-[#bebebe]">
        <div className="min-w-0 flex-1">
          <table className="w-full table-fixed border-collapse">
            <thead>
              <tr>
                <Th className="w-[80px]">Статус</Th>
                <Th />
                <Th align="justify-start" className="w-[86px] pl-2.5">Тип наклад</Th>
              </tr>
            </thead>
            <tbody>
              {INVOICES.map((row, i) => (
                <tr key={i}>
                  <td className="h-6 border-b border-[#a0a0a0] p-0">
                    <div className="flex items-center gap-0.5">{row.icons.map((I, j) => <I key={j} />)}</div>
                  </td>
                  <td className="border-b border-[#a0a0a0]" />
                  <td className={`overflow-hidden whitespace-nowrap border-b border-[#a0a0a0] p-0 leading-5 ${row.kind === 'ие' ? 'pl-3' : ''}`}>{row.kind}</td>
                </tr>
              ))}
            </tbody>
          </table>
          <HScroll />
        </div>
        <div className="flex flex-col">
          <VScroll space="h-6" thumb="h-9" className="flex-1" />
          <div className="h-[21px]" />
        </div>
      </div>
    </section>
  );
}

function PositionPane() {
  return (
    <section className="flex flex-1 flex-col border-t border-[#828790]">
      <div className="flex h-[66px]">
        <div className="pl-4 pt-2.5">
          <div className="leading-6">Позиции</div>
          <div className="pt-1 text-base font-bold leading-6">1</div>
        </div>
        <div className="ml-auto flex items-center">
          <IconButton label="Список"><CheckList /></IconButton>
          <div className="ml-2 mr-1 h-[58px] w-px bg-[#a0a0a0]" />
          <PinButton />
        </div>
      </div>
      <div className="flex-1 border-t border-[#828790] bg-[#bebebe]">
        <table className="w-full table-fixed border-collapse">
          <thead>
            <tr><Th className="w-[63px]" /><Th /><Th className="w-[114px]">Остаток</Th></tr>
          </thead>
          <tbody>
            <tr className="bg-[#a0a0a0]">
              <td className="h-6 p-0"><div className="flex"><RedPlus /><Printer /></div></td><td /><td />
            </tr>
          </tbody>
        </table>
      </div>
    </section>
  );
}

/* ---------- template dialog ---------- */

const TEMPLATES = [
  ['базовый Н', '123'], ['для теста отображения', ''], ['Единый шаблон для расценки...', '123'],
  ['Расценка уценки', ''], ['тест отображения Н', ''], ['тест отправки Н', ''],
];
const TYPES = [
  'Яды (ЖВ)', 'Наркотические средства (ЖВ)', 'Комбинированные (ЖВ)', 'Иные ПКУ (ЖВ)', 'ЖНВЛС', 'Яды',
  'Наркотические средства', 'Комбинированные', 'Иные ПКУ', 'Обязательный ассортимент', 'Лекарства и БАД',
  'Лекарства и БАД', 'Лекарства и БАД', 'Планирование семьи',
];

function TemplateDialog() {
  return (
    <div role="dialog" aria-label="Настройка шаблонов расценки" className="absolute left-[68px] right-[97px] top-[145px] border border-[#7d8186] bg-[#f0f0f0] shadow-[0_4px_16px_rgba(0,0,0,0.45)]">
      <header className="flex h-[38px] items-center bg-white pl-2 pr-3.5 text-sm text-[#8a8a8a]">
        <Logo />
        <h2 className="ml-[5px]">Настройка шаблонов расценки на СУ Яул. Победы, д. 125, г. Самара (Катасонова)</h2>
        <IconButton label="Закрыть" className="ml-auto"><Cross /></IconButton>
      </header>
      <div className="flex gap-[7px]">
        <div className="flex w-[407px] shrink-0 flex-col">
          <div className="flex h-11 items-start pl-[61px] pt-[5px]">
            <input type="text" aria-label="Поиск шаблона" className="h-[26px] w-[229px] border border-[#7a7a7a] bg-white px-1 outline-none" />
            <IconButton label="Найти шаблон" className="ml-3"><Magnifier /></IconButton>
          </div>
          <div className="h-[340px] border-y border-r border-[#828790] bg-[#bebebe]">
            <table className="w-full table-fixed border-collapse">
              <thead><tr><Th sort className="w-[236px]">Шаблон</Th><Th>Фикс. цена</Th></tr></thead>
              <tbody>
                {TEMPLATES.map(([name, price], i) => (
                  <tr key={name} className={i === 0 ? 'bg-[#a0a0a0]' : ''}>
                    <td className={`h-6 overflow-hidden whitespace-nowrap border-b border-r border-[#a0a0a0] p-0 pl-[3px] leading-5 ${i === 0 ? 'bg-[#8097a6]' : ''}`}>{name}</td>
                    <td className="border-b border-[#a0a0a0] p-0 pl-1 text-base leading-5">{price}</td>
                  </tr>
                ))}
              </tbody>
            </table>
          </div>
          <div className="flex h-12 items-center">
            <IconButton label="Добавить шаблон" className="ml-[63px]"><Plus3D /></IconButton>
            <IconButton label="Удалить шаблон" className="ml-5"><Minus3D /></IconButton>
            <div className="ml-[15px] h-[38px] w-px bg-[#a0a0a0]" />
            <IconButton label="Копировать шаблон" className="ml-3"><DocTick /></IconButton>
            <IconButton label="Наценка поставщика" className="ml-[65px] h-[47px] w-[54px] border-[5px] border-[#e81c24]"><Truck /></IconButton>
            <div className="relative ml-[3px] flex">
              <IconButton label="Наценка аптеки"><CottageIcon /></IconButton>
              <span className="absolute left-0.5 top-[34px] text-2xl font-bold leading-8 text-[#e02127]">1</span>
            </div>
          </div>
          <div className="flex h-8 items-center gap-[5px]">
            <span className="relative flex">
              <input id="default" type="checkbox" defaultChecked className="h-4 w-4 appearance-none border border-[#333] bg-white" />
              <svg width="12" height="12" viewBox="0 0 12 12" className="pointer-events-none absolute left-0.5 top-0.5" aria-hidden="true"><path d="M1 6l3.500 3.500L11 2" fill="none" stroke="#333" strokeWidth="1.500" /></svg>
            </span>
            <label htmlFor="default">Использовать по умолчанию</label>
          </div>
          <fieldset className="mt-0.5 border border-l-0 border-[#dcdcdc]">
            <legend className="ml-1.5 px-1 text-xs leading-4">Базовая цена для переоценки</legend>
            <div className="flex flex-col gap-1.5">
              <Radio id="b1" name="base" label="Цена поставщика с НДС" checked />
              <Radio id="b2" name="base" label="Цена поставщика с НДС + Уценка" />
              <Radio id="b3" name="base" label="Розничная цена" />
            </div>
          </fieldset>
          <fieldset className="mt-2 border border-x-0 border-b-0 border-[#dcdcdc]">
            <legend className="ml-1.5 px-1 text-xs leading-4">Округление розничной цены</legend>
            <div className="relative">
              <select aria-label="Округление розничной цены" className="h-[26px] w-full appearance-none border border-[#adadad] bg-[#e1e1e1] pl-1 outline-none"><option>Нет</option></select>
              <span className="pointer-events-none absolute right-1 top-1.5"><Chevron thin /></span>
            </div>
          </fieldset>
        </div>

        <div className="flex min-w-0 flex-1 flex-col">
          <fieldset className="min-w-0 border border-r-0 border-[#dcdcdc]">
            <legend className="ml-1.5 px-1 text-xs leading-4">Тип позиции</legend>
            <div className="flex gap-2">
              <div className="flex min-w-0 flex-1 border border-[#828790] bg-[#bebebe]">
                <ul className="min-w-0 flex-1 pb-[3px] pl-px pt-0.5">
                  {TYPES.map((t, i) => (
                    <li key={i} className={`h-[23px] whitespace-nowrap pl-[3px] leading-[23px] ${i === 4 ? 'bg-[#a0a0a0]' : ''}`}>{t}</li>
                  ))}
                </ul>
                <VScroll space="h-0" thumb="h-[143px]" />
              </div>
              <div className="flex w-10 flex-col">
                <IconButton label="Добавить тип" className="h-11 pb-2"><Plus3D /></IconButton>
                <div className="h-px bg-[#a0a0a0]" />
                <IconButton label="Удалить тип" className="h-[60px]"><Minus3D /></IconButton>
                <div className="h-14" />
                <IconButton label="Вверх" className="h-[52px]"><Coin dir="up" /></IconButton>
                <div className="h-px bg-[#a0a0a0]" />
                <IconButton label="Вниз" className="h-[56px]"><Coin dir="down" /></IconButton>
              </div>
            </div>
          </fieldset>
          <div className="mt-1.5 flex-1 border border-[#828790] bg-[#bebebe]">
            <table className="w-full table-fixed border-collapse">
              <thead>
                <tr>
                  <Th className="w-[264px]">Нижняя граница</Th><Th>Верхняя граница</Th>
                  <Th className="w-[146px]">Контрольная наценка</Th><Th className="w-[158px]">Округление</Th>
                </tr>
              </thead>
              <tbody>
                {['0', '100', '500'].map((v) => (
                  <tr key={v}>
                    <td className="h-6 border-b border-r border-[#a0a0a0] p-0 pl-[3px] leading-5">{v}</td>
                    <td className="border-b border-r border-[#a0a0a0]" />
                    <td className="border-b border-r border-[#a0a0a0]" />
                    <td className="border-b border-[#a0a0a0] p-0 pl-[3px] leading-5">Общее округление</td>
                  </tr>
                ))}
              </tbody>
            </table>
          </div>
          <div className="flex h-[45px] items-center pl-[5px] pt-1">
            <IconButton label="Добавить границу"><Plus3D /></IconButton>
            <IconButton label="Удалить границу" className="ml-5"><Minus3D /></IconButton>
            <button type="button" className="ml-auto flex h-[27px] items-center gap-1 border border-[#adadad] bg-[#e1e1e1] px-1.5 text-xs font-bold"><SmallTick />Применить выбранный</button>
            <button type="button" className="ml-[9px] flex h-[27px] w-[91px] items-center justify-center gap-1 border-2 border-[#0f6fc0] bg-[#e1e1e1] text-xs font-bold"><SmallTick />Ok</button>
          </div>
        </div>
      </div>
    </div>
  );
}

/* ---------- markup dialog ---------- */

const LIMITS = ['до 100 руб. включительно', 'свыше 100 руб. до 500 руб.', 'свыше 500 руб'];

const LimitGroup = ({ id, title, values, disabled, focused, className = '' }) => (
  <fieldset className={`border border-[#dcdcdc] px-[11px] pb-2.5 ${className}`}>
    <legend className="-ml-1.5 px-1 text-xs leading-4">{title}</legend>
    <div className="flex flex-col gap-1.5 pt-3">
      {LIMITS.map((l, i) => (
        <div key={l} className="flex h-6 items-center justify-between">
          <label htmlFor={`${id}${i}`} className="whitespace-nowrap">{l}</label>
          <Spin id={`${id}${i}`} value={values[i]} disabled={disabled} focused={focused && i === 0} />
        </div>
      ))}
    </div>
  </fieldset>
);

const Side = ({ id, title, top, bottom, disabled, focused, mark }) => (
  <div className="relative min-w-0 flex-1">
    <fieldset className="border border-[#dcdcdc] px-2.5 pb-2.5">
      <legend className="-ml-1.5 px-1 text-xs leading-4">{title}</legend>
      <LimitGroup id={`${id}a`} title="Прочие ЖВ" values={top} disabled={disabled} className="mt-3" />
      <LimitGroup id={`${id}b`} title="ЖВ - ПКУ" values={bottom} disabled={disabled} focused={focused} className="mt-[7px]" />
    </fieldset>
    <div className={`pointer-events-none absolute -top-2 bottom-0 border-[5px] border-[#e81c24] ${mark}`} />
  </div>
);

function MarkupDialog() {
  return (
    <div role="dialog" aria-label="Контроль наценки поставщика" className="absolute left-[608px] top-[287px] w-[705px] border border-[#1a75bb] bg-[#f0f0f0] text-base shadow-[0_4px_18px_rgba(0,0,0,0.5)]">
      <header className="flex h-[37px] items-center bg-[#0078d7] pl-[9px] pr-3.5 text-sm text-white">
        <Logo />
        <h2 className="ml-[5px]">Контроль наценки поставщика</h2>
        <IconButton label="Закрыть окно" className="ml-auto"><Cross color="#fff" /></IconButton>
      </header>
      <div className="px-[14px] pb-2.5 pt-3">
        <div className="grid h-6 grid-cols-[281px_1fr] items-center">
          <div className="flex items-center">
            <label htmlFor="low" className="w-[101px] whitespace-nowrap text-[15px]">Левый порог</label>
            <Spin id="low" value="100,00" />
            <span className="ml-8 text-2xl font-bold leading-6 text-[#e02127]">3</span>
          </div>
          <div className="flex items-center">
            <label htmlFor="high" className="w-[111px] whitespace-nowrap text-[15px]">Правый порог</label>
            <Spin id="high" value="500,00" className="w-[187px]" />
            <span className="ml-8 text-2xl font-bold leading-6 text-[#e02127]">2</span>
          </div>
        </div>
        <div className="mt-[7px] flex gap-2">
          <Side id="w" title="Настройки для склада (выше по приоритету)" top={['0,00', '0,00', '0,00']} bottom={['0,00', '0,00', '0,00']} focused mark="-left-[5px] right-[10px]" />
          <Side id="c" title="Настройки для клиента" top={['16,00', '14,00', '12,00']} bottom={['22,00', '20,00', '18,00']} disabled mark="left-0 right-[5px]" />
        </div>
        <div className="mt-[9px] flex gap-2 text-xs">
          <button type="button" className="h-[26px] flex-1 border border-[#adadad] bg-[#e1e1e1]">Отмена</button>
          <button type="button" className="h-[26px] flex-1 border-2 border-[#1a6fb5] bg-[#e1e1e1]">Сохранить</button>
        </div>
      </div>
    </div>
  );
}

/* ---------- page ---------- */

const MENU = ['Учет', 'Функции', 'Маркетинг', 'Поставщик', 'Справка', 'Журнал накладных'];

export default function App() {
  return (
    <div className="relative min-h-screen overflow-hidden bg-[#e4e4e4] pr-0.5 font-['Noto_Sans','Open_Sans',sans-serif] text-[15px] leading-5 text-black">
      <Defs />
      <div className="flex min-h-screen flex-col border-r-2 border-t border-[#828790] bg-[#f0f0f0]">
        <header className="flex h-9 items-center bg-white pl-1.5 text-sm text-[#8a8a8a]">
          <Logo />
          <h1 className="ml-[5px]">ФармЭксперт - Журнал накладных ()</h1>
          <div className="ml-auto flex items-center gap-[45px] pr-[21px]">
            <button type="button" aria-label="Свернуть" className="flex h-3.5 w-3.5 items-center"><span className="h-px w-3 bg-[#8a8a8a]" /></button>
            <button type="button" aria-label="Развернуть" className="h-3 w-3 border border-[#8a8a8a]" />
            <IconButton label="Закрыть программу"><Cross /></IconButton>
          </div>
        </header>
        <div className="flex h-[31px] items-center border-b border-[#828790] bg-white">
          <nav className="flex w-[852px] gap-[15px] pl-[5px] text-[#9a9a9a]">
            {MENU.map((m) => <a key={m} href="#menu">{m}</a>)}
          </nav>
          <div className="relative flex-1">
            <select aria-label="Аптека" className="h-[29px] w-full appearance-none border border-[#adadad] bg-[#e1e1e1] pl-[3px] outline-none"><option>Яул. Победы, д. 125, г. Самара (Катасонова)</option></select>
            <span className="pointer-events-none absolute right-1 top-2"><Chevron thin /></span>
          </div>
        </div>
        <div className="grid h-[268px] grid-cols-[590px_1fr]">
          <SearchPane />
          <StockPane />
        </div>
        <InvoicePane />
        <PositionPane />
        <footer className="flex h-[29px] items-center whitespace-nowrap border-t-2 border-[#828790] text-base">
          <p className="-ml-0.5"><b>Оператор:</b> Наталья</p>
          <p className="ml-5"><b>Склад:</b> 5395 | Яул. Побед...</p>
          <p className="ml-5"><b>Версия FX:</b> (сборка от x64_fxService_19_11_2021_17:00:51)</p>
          <div className="ml-auto flex items-center text-[15px]">
            <b className="text-[#45b02a]">ГИСМТ</b>
            <b className="ml-2 text-[#f03338]">МДЛП</b>
            <IconButton label="Назад" className="ml-3"><Coin dir="left" size={18} /></IconButton>
            <IconButton label="Вперёд" className="ml-4"><Coin dir="right" size={18} /></IconButton>
            <span className="ml-3 text-[#0b7d1e]">Сервис доступен</span>
          </div>
        </footer>
      </div>
      <TemplateDialog />
      <MarkupDialog />
    </div>
  );
}
